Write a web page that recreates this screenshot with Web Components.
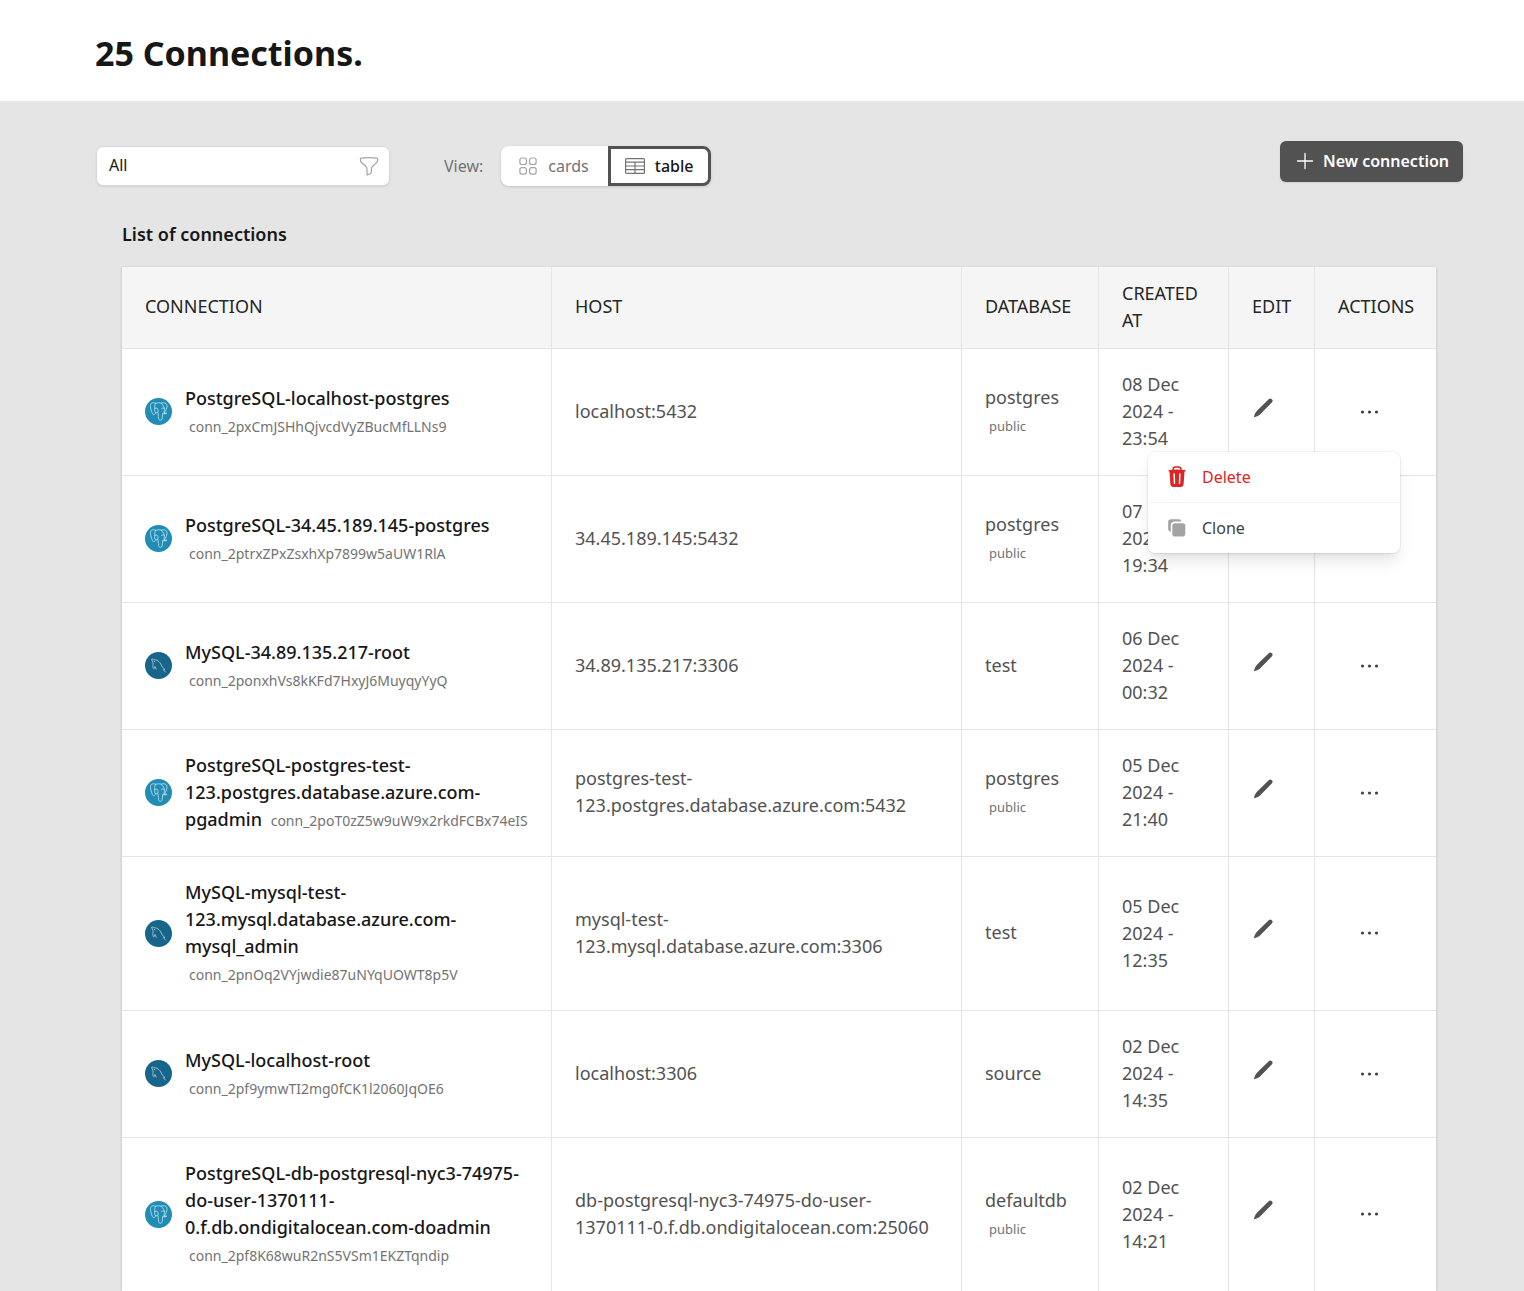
<!DOCTYPE html>
<html lang="en">
<head>
<meta charset="utf-8">
<meta name="viewport" content="width=device-width, initial-scale=1">
<title>Connections</title>
<style>
  html { background: #e5e5e5; }
  body { margin: 0; font-family: "Noto Sans", sans-serif; font-size: 18px; line-height: 27px; color: #171717; }
</style>
</head>
<body>
<connections-page></connections-page>

<script>
const define = (name, html, setup) => {
  const template = document.createElement('template');
  template.innerHTML = html;
  customElements.define(name, class extends HTMLElement {
    connectedCallback() {
      if (this.shadowRoot) return;
      const root = this.attachShadow({ mode: 'open' });
      root.append(template.content.cloneNode(true));
      if (setup) setup(this, root);
    }
  });
};

const icons = {
  postgres: `<svg viewBox="0 0 27 27" width="27" height="27" fill="none" stroke="#c4e5f1" stroke-width=".8" stroke-linecap="round" stroke-linejoin="round" aria-hidden="true">
    <circle cx="13.5" cy="13.5" r="13.5" fill="#218cb6" stroke="none"/>
    <path d="M10.4 5.2C7.6 3.9 5.3 5.2 5.5 8.3c.2 3.2 1.6 7.5 2.8 8.3.9.6 1.7-.7 2.6-1.9"/>
    <path d="M10.5 5.3c1.8-.5 4.2-.7 5.7-.1 2.7-1 5.1-.3 5.7 1.6.7 2.2-1 5.9-2.6 8.3"/>
    <path d="M10.7 5.3c-1.5 1.7-.8 4.2-1 6.3-.2 2 .3 3.2 2.1 3.3 1.2 0 1.5-1.4 1.1-3.3-.3-1.6-1.2-1.9-3-1.2"/>
    <path d="M16.2 5.2c2 1.8 3.3 4.2 3.2 6.1-.1 1.7-.8 2.5-.2 3.9"/>
    <path d="M13 14.9c.7 2 0 5.4 1 6.7.8 1.100 2.6.9 3.100-.6.5-1.6.2-4 .6-5.600 1.400.8 3 .6 4.200-.3-1 .1-2.100.3-2.700.1"/>
    <path d="M16.600 10.300c.9-.5 1.800-.3 2.700 0"/>
  </svg>`,
  mysql: `<svg viewBox="0 0 27 27" width="27" height="27" fill="none" stroke="#a8c5d5" stroke-width=".9" stroke-linecap="round" stroke-linejoin="round" aria-hidden="true">
    <circle cx="13.5" cy="13.5" r="13.5" fill="#17658b" stroke="none"/>
    <path d="M6.600 7.600c.5-.9 1.700-.6 2.400.1 4.400.1 6.500 3.300 7.900 6.500.7 1.500 1.500 2 3 3.200l-1.500.3 1.900 2.300"/>
    <path d="M6.600 7.600c.2 1.200 1.200 1.900 1.400 3.100.2 1.800-.6 3.700.2 5.600.5 1.100 1.100.6 1.300-.5l.4-1.300 1.300 2.700"/>
    <path d="M9.300 9.200l.5.800"/>
  </svg>`,
  pencil: `<svg viewBox="0 0 20 20" width="20" height="20" aria-hidden="true"><path fill="#525252" d="M18.800 1.200a2.200 2.200 0 0 0-3.100 0L4.200 12.500C2.400 14.300 1.500 16.500.9 19.300c2.800-.6 4.900-1.600 6.600-3.300L18.800 4.500a2.300 2.300 0 0 0 0-3.300z"/></svg>`,
  dots: `<svg viewBox="0 0 27 27" width="27" height="27" fill="#404040" aria-hidden="true"><circle cx="6.500" cy="14" r="1.600"/><circle cx="13.500" cy="14" r="1.600"/><circle cx="20.500" cy="14" r="1.600"/></svg>`
};

define('db-icon', `
  <style>:host { display: block; flex: none; width: 27px; height: 27px; } svg { display: block; }</style>
`, (host, root) => root.append(document.createRange().createContextualFragment(icons[host.getAttribute('type')])));

define('page-header', `
  <style>
    :host { display: block; background: #fff; padding: 33px 95px 27px; }
    h1 { margin: 0; font-size: 34px; line-height: 41px; font-weight: 700; }
  </style>
  <header><h1><slot></slot></h1></header>
`);

define('connection-filter', `
  <style>
    :host { display: block; width: 294px; }
    label { display: flex; align-items: center; box-sizing: border-box; height: 40px; padding: 0 9px 1px 12px; background: #fff; border: 1px solid #d8d8d8; border-radius: 7px; box-shadow: 0 1px 2px rgba(0,0,0,.08); }
    input { flex: 1; min-width: 0; height: 24px; border: 0; padding: 0 0 1px; background: none; outline: 0; font: 16px/24px "Noto Sans", sans-serif; color: #171717; }
    svg { flex: none; }
  </style>
  <label>
    <input type="text" role="combobox" aria-label="Filter connections" aria-expanded="false" value="All">
    <svg viewBox="0 0 22 22" width="22" height="22" fill="none" stroke="#a3a3a3" stroke-width="1.2" stroke-linejoin="round" stroke-linecap="round" aria-hidden="true"><path d="M11 2.600c2.600 0 5.200.2 7.700.6.600.1 1 .6 1 1.100v.8c0 .8-.3 1.600-.9 2.200l-4.500 4.400c-.6.600-.9 1.400-.9 2.200v2.400c0 1.100-.7 2.200-1.700 2.700L9 19.900V13.900c0-.8-.3-1.600-.9-2.200L3.300 7.300c-.6-.6-.9-1.400-.9-2.200v-.8c0-.6.400-1 .9-1.100 2.500-.4 5.100-.6 7.700-.6z"/></svg>
  </label>
`);

define('view-toggle', `
  <style>
    :host { display: flex; align-items: center; gap: 18px; font-size: 16px; line-height: 24px; color: #737373; }
    .group { display: flex; border-radius: 8px; background: #fff; box-shadow: 0 1px 3px rgba(0,0,0,.15); }
    label { display: flex; align-items: center; box-sizing: border-box; height: 40px; padding: 0 19px 0 18px; gap: 11px; border-radius: 8px 0 0 8px; font-weight: 500; }
    label + label { padding: 0 15px 0 13px; gap: 9px; border: 3px solid #525252; border-radius: 0 8px 8px 0; color: #171717; }
    input { position: absolute; opacity: 0; width: 1px; height: 1px; margin: 0; pointer-events: none; }
    svg { flex: none; fill: none; stroke: #a3a3a3; stroke-width: 1.2; }
    label + label svg { stroke: #737373; }
    label:first-child { font-weight: 400; }
  </style>
  <span id="view-label">View:</span>
  <div class="group" role="radiogroup" aria-labelledby="view-label">
    <label><input type="radio" name="view" value="cards">
      <svg viewBox="0 0 18 18" width="18" height="18" aria-hidden="true"><rect x=".9" y="1" width="6.5" height="6.5" rx="2"/><rect x="10.6" y="1" width="6.5" height="6.5" rx="2"/><rect x=".9" y="10.6" width="6.5" height="6.5" rx="2"/><rect x="10.6" y="10.6" width="6.5" height="6.5" rx="2"/></svg>
      <span>cards</span></label>
    <label><input type="radio" name="view" value="table" checked>
      <svg viewBox="0 0 22 20" width="22" height="20" aria-hidden="true"><rect x="1.6" y="2.6" width="18.8" height="14.8" rx="1"/><path d="M1.600 6.200h18.800M1.600 10h18.800M1.600 13.700h18.800M11 6.200v11.200"/></svg>
      <span>table</span></label>
  </div>
`);

define('new-button', `
  <style>
    :host { display: block; }
    button { display: flex; align-items: center; gap: 8px; box-sizing: border-box; height: 41px; padding: 0 14px 1px 15px; border: 0; border-radius: 6px; background: #525252; color: #fff; font: 600 16px/24px "Noto Sans", sans-serif; box-shadow: 0 1px 2px rgba(0,0,0,.1); }
  </style>
  <button type="button">
    <svg viewBox="0 0 20 20" width="20" height="20" fill="none" stroke="#fff" stroke-width="1.3" stroke-linecap="round" aria-hidden="true"><path d="M10 2.500v15M2.500 10h15"/></svg>
    <slot></slot>
  </button>
`);

define('row-menu', `
  <style>
    :host { display: block; position: relative; }
    button { border: 0; background: none; padding: 0; font: inherit; }
    .more { display: grid; place-items: center; width: 100%; height: 27px; }
    .menu { position: absolute; z-index: 2; top: 54px; right: 0; width: 252px; background: #fff; border-radius: 7px; box-shadow: 0 0 0 1px rgba(0,0,0,.05), 0 11px 17px -3px rgba(0,0,0,.1), 0 4px 7px -4px rgba(0,0,0,.1); }
    .menu button { display: flex; align-items: center; gap: 14px; width: 100%; height: 50px; padding: 0 18px; font-size: 16px; line-height: 24px; color: #404040; }
    .menu button:first-child { height: 51px; color: #dc2626; border-bottom: 1px solid #f5f5f5; }
  </style>
  <button class="more" type="button" aria-label="Actions" aria-haspopup="menu">${icons.dots}</button>
`, (host, root) => {
  if (!host.hasAttribute('open')) return;
  root.append(document.createRange().createContextualFragment(`
    <div class="menu" role="menu">
      <button type="button" role="menuitem">
        <svg viewBox="0 0 22 22" width="22" height="22" aria-hidden="true"><path d="M7 4.300V3.500C7 2 8.200 1 9.700 1h2.600C13.800 1 15 2 15 3.500v.8" fill="none" stroke="#dc2626" stroke-width="1.5"/><path fill="#dc2626" fill-rule="evenodd" d="M3.200 3.900Q11 2.900 18.800 3.900q.8.200.7 1-.2.700-1 .6L17.600 18.600Q17.400 21 15 21H7q-2.400 0-2.600-2.400L3.500 5.500q-.8.100-1-.6-.1-.8.700-1zM8.100 7.200a.7.700 0 0 0-.7.800l.4 9.400a.7.700 0 0 0 1.400 0L8.900 7.900a.7.700 0 0 0-.8-.7zm5.800 0a.7.700 0 0 0-.8.700l-.3 9.500a.7.700 0 0 0 1.400 0l.4-9.400a.7.700 0 0 0-.7-.8z"/></svg>
        <span>Delete</span></button>
      <button type="button" role="menuitem">
        <svg viewBox="0 0 22 22" width="22" height="22" fill="#a3a3a3" aria-hidden="true"><path d="M5 2.200h7.500a3 3 0 0 1 3 2.400H8.800a4 4 0 0 0-4 4v6.200a3 3 0 0 1-2.600-3V5A2.800 2.800 0 0 1 5 2.200z"/><rect x="6.300" y="6.200" width="13" height="13.300" rx="2.800"/></svg>
        <span>Clone</span></button>
    </div>`));
});

const connections = [
  ['postgres', 'PostgreSQL-localhost-postgres', 'conn_2pxCmJSHhQjvcdVyZBucMfLLNs9', 'localhost:5432', 'postgres', 'public', '08 Dec 2024 - 23:54'],
  ['postgres', 'PostgreSQL-34.45.189.145-postgres', 'conn_2ptrxZPxZsxhXp7899w5aUW1RlA', '34.45.189.145:5432', 'postgres', 'public', '07 Dec 2024 - 19:34'],
  ['mysql', 'MySQL-34.89.135.217-root', 'conn_2ponxhVs8kKFd7HxyJ6MuyqyYyQ', '34.89.135.217:3306', 'test', '', '06 Dec 2024 - 00:32'],
  ['postgres', 'PostgreSQL-postgres-test-123.postgres.database.azure.com-pgadmin', 'conn_2poT0zZ5w9uW9x2rkdFCBx74eIS', 'postgres-test-123.postgres.database.azure.com:5432', 'postgres', 'public', '05 Dec 2024 - 21:40'],
  ['mysql', 'MySQL-mysql-test-123.mysql.database.azure.com-mysql_admin', 'conn_2pnOq2VYjwdie87uNYqUOWT8p5V', 'mysql-test-123.mysql.database.azure.com:3306', 'test', '', '05 Dec 2024 - 12:35'],
  ['mysql', 'MySQL-localhost-root', 'conn_2pf9ymwTI2mg0fCK1l2060JqOE6', 'localhost:3306', 'source', '', '02 Dec 2024 - 14:35'],
  ['postgres', 'PostgreSQL-db-postgresql-nyc3-74975-do-user-1370111-0.f.db.ondigitalocean.com-doadmin', 'conn_2pf8K68wuR2nS5VSm1EKZTqndip', 'db-postgresql-nyc3-74975-do-user-1370111-0.f.db.ondigitalocean.com:25060', 'defaultdb', 'public', '02 Dec 2024 - 14:21']
];

define('connections-table', `
  <style>
    :host { display: block; background: #fff; box-shadow: 0 1px 3px rgba(0,0,0,.18); }
    table { width: 100%; table-layout: fixed; border-collapse: separate; border-spacing: 0; color: #525252; }
    .name { width: 430px; } .db { width: 137px; } .date { width: 130px; } .edit { width: 86px; } .actions { width: 121px; }
    th { text-align: left; font-weight: 400; text-transform: uppercase; color: #262626; background: #f5f5f5; padding: 12px 22px 14px 23px; }
    th.tall { padding-top: 13px; }
    td { padding: 21px 22px 23px 23px; }
    th, td { vertical-align: middle; border-bottom: 1px solid #e5e5e5; border-right: 1px solid #e5e5e5; }
    th:last-child, td:last-child { border-right: 0; }
    td:first-child { padding-top: 22px; padding-right: 19px; }
    td:last-child { padding-right: 36px; }
    .conn { display: flex; align-items: center; gap: 13px; }
    b { font-weight: 500; color: #171717; }
    small { display: inline-block; margin-left: 4px; font-size: 13px; line-height: 18px; color: #737373; }
    .conn small { font-size: 14px; }
    .pencil { display: block; padding: 0 0 7px 1px; border: 0; background: none; }
    .pencil svg { display: block; }
    .cell-date { padding-top: 22px; padding-right: 30px; }
  </style>
  <table>
    <colgroup><col class="name"><col><col class="db"><col class="date"><col class="edit"><col class="actions"></colgroup>
    <thead><tr><th>Connection</th><th>Host</th><th>Database</th><th class="tall">Created at</th><th>Edit</th><th>Actions</th></tr></thead>
    <tbody></tbody>
  </table>
`, (host, root) => {
  root.querySelector('tbody').innerHTML = connections.map(([type, name, id, address, db, schema, date], i) => `
    <tr>
      <td><div class="conn"><db-icon type="${type}"></db-icon><div><b>${name}</b> <small>${id}</small></div></div></td>
      <td>${address}</td>
      <td>${db}${schema ? ` <small>${schema}</small>` : ''}</td>
      <td class="cell-date">${date}</td>
      <td><button class="pencil" type="button" aria-label="Edit ${name}">${icons.pencil}</button></td>
      <td><row-menu${i === 0 ? ' open' : ''}></row-menu></td>
    </tr>`).join('');
});

define('connections-page', `
  <style>
    :host { display: block; }
    main { padding: 40px 61px 0 95px; }
    .bar { display: flex; align-items: flex-start; }
    .tools { display: flex; align-items: center; gap: 54px; padding: 5px 0 0 1px; flex: 1; }
    section { padding: 0 27px; }
    h2 { margin: 0; padding: 35px 0 19px; font-size: 18px; line-height: 27px; font-weight: 600; }
  </style>
  <page-header>25 Connections.</page-header>
  <main>
    <div class="bar">
      <div class="tools"><connection-filter></connection-filter><view-toggle></view-toggle></div>
      <new-button>New connection</new-button>
    </div>
    <section>
      <h2>List of connections</h2>
      <connections-table></connections-table>
    </section>
  </main>
`);
</script>
</body>
</html>
